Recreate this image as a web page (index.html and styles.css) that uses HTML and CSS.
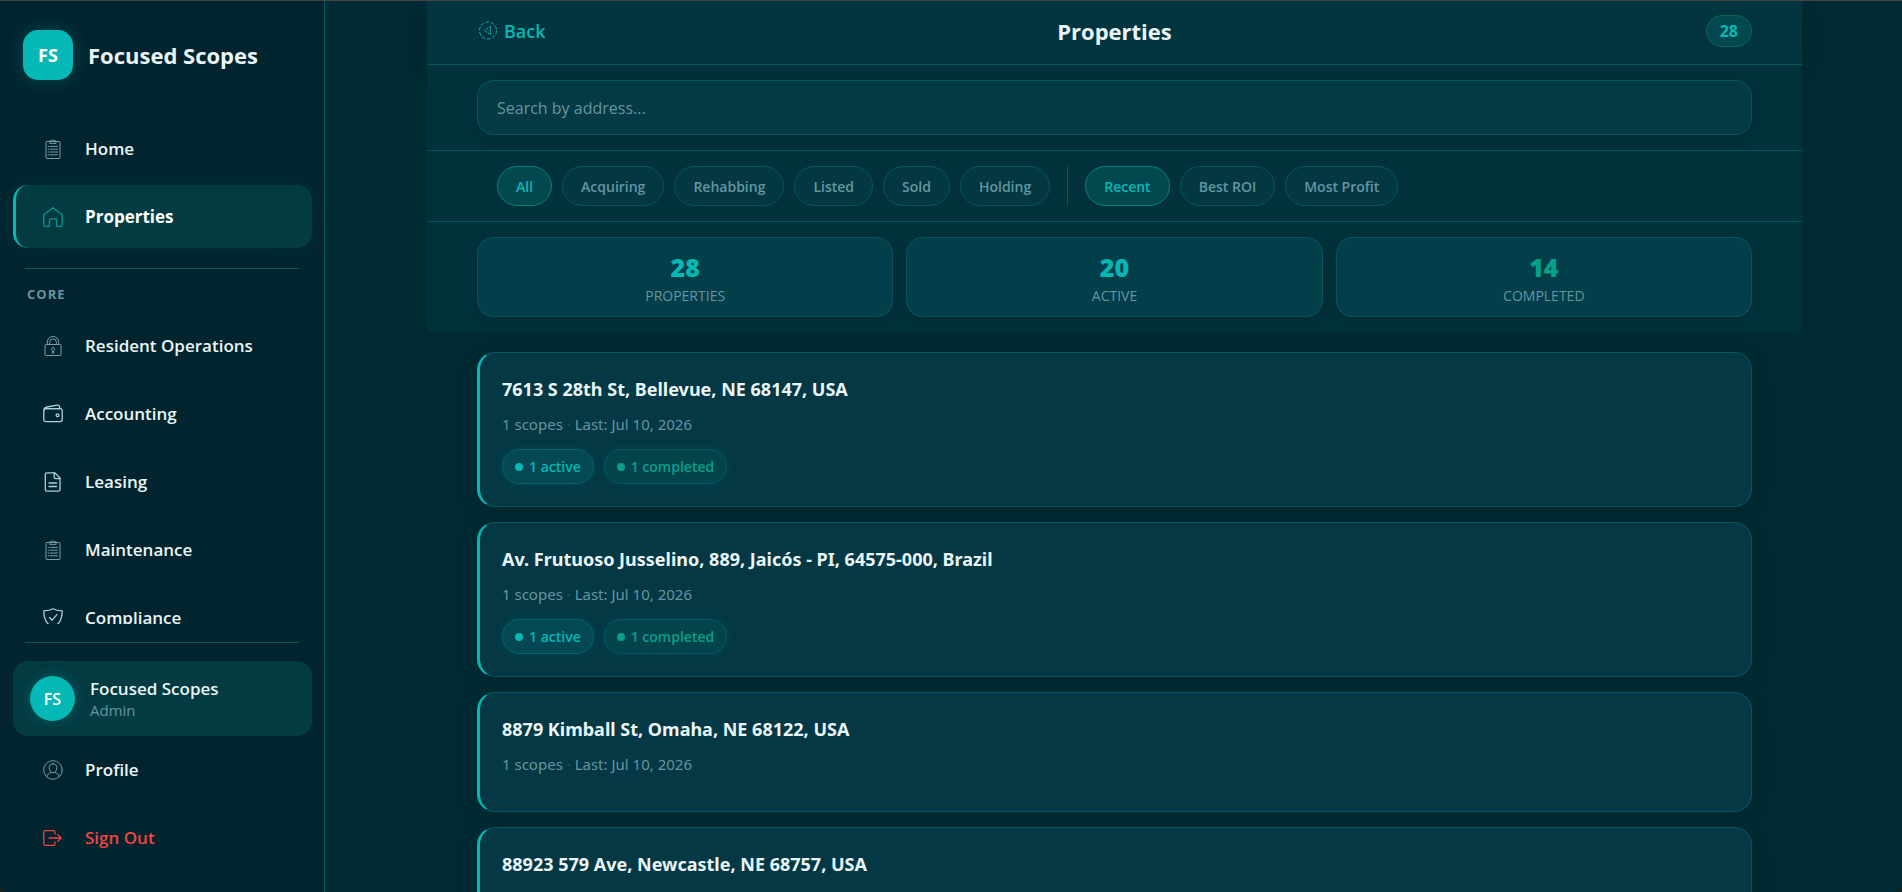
FILE: index.html
```html
<!DOCTYPE html>
<html lang="en">

<head>
  <meta charset="UTF-8">
  <meta name="viewport" content="width=device-width, initial-scale=1.0">
  <title>Properties - Focused Scopes</title>
  <link rel="stylesheet" href="styles.css">
</head>

<body>
  <svg class="sprite" aria-hidden="true">
    <symbol id="i-clipboard" viewBox="0 0 20 20">
      <rect x="3" y="2.5" width="14" height="17" rx="1" />
      <path d="M7 3V1.8h1.7a1.4 1.4 0 0 1 2.6 0H13V4.4H7z" />
      <path d="M7.5 7.4h7M7.5 10.2h7M7.5 13h7M7.5 15.8h7M5.2 7.4h.8M5.2 10.2h.8M5.2 13h.8M5.2 15.8h.8" />
    </symbol>
    <symbol id="i-house" viewBox="0 0 20 20">
      <path d="M.8 7.8 10 .8l9.200 7v10.200a1.300 1.300 0 0 1-1.300 1.300h-4.300v-6a1.400 1.400 0 0 0-1.400-1.400H7.800a1.400 1.400 0 0 0-1.400 1.400v6H2.100A1.300 1.300 0 0 1 .8 18z" />
    </symbol>
    <symbol id="i-lock" viewBox="0 0 20 20">
      <rect x="2" y="8.500" width="16" height="11" rx="1.200" />
      <path d="M4.300 8.500V6.200a5.700 5.700 0 0 1 11.400 0v2.300M6.600 8.500V6.400a3.400 3.400 0 0 1 6.800 0v2.100" />
      <path d="M9.300 16.800v-2.400a1.500 1.500 0 1 1 1.400 0v2.400z" />
    </symbol>
    <symbol id="i-wallet" viewBox="0 0 20 20">
      <rect x=".8" y="4.600" width="18.400" height="13" rx="2" />
      <path d="M1 6.200C1 4.200 2 3.400 4 3l10.400-1.800c1.400-.2 2.200.4 2.200 1.600v1.800M2 4.600h15" />
      <circle class="dot" cx="14.500" cy="11.200" r="1.400" />
    </symbol>
    <symbol id="i-file" viewBox="0 0 20 20">
      <path d="M4 .8h7.800L17 6v11.500a1.700 1.700 0 0 1-1.700 1.700H4a1.700 1.700 0 0 1-1.700-1.700v-15A1.700 1.700 0 0 1 4 .8z" />
      <path d="M11.200 1v4.200a1.400 1.400 0 0 0 1.400 1.400H17M6 11h7.500M6 14.500h7.500" />
    </symbol>
    <symbol id="i-shield" viewBox="0 0 20 20">
      <path d="M10 .8c2.600 1.400 5.600 2 9.200 2.100 0 7.300-1.700 13-9.200 16.300C2.500 15.900.8 10.200.8 2.900 4.400 2.800 7.400 2.200 10 .8z" />
      <path d="m6.500 9.500 2.600 2.700 4.800-5.600" />
    </symbol>
    <symbol id="i-user" viewBox="0 0 20 20">
      <circle cx="10" cy="10" r="9.300" />
      <path d="M10 3.800c2.500 0 4 1.700 3.800 4.100-.2 2.700-1.700 4.800-3.800 4.800S6.400 10.600 6.200 7.900C6 5.500 7.500 3.800 10 3.800z" />
      <path d="M3.800 16.800c.5-2.500 1.800-3.800 4.200-4.400M16.200 16.800c-.5-2.500-1.800-3.800-4.200-4.400" />
    </symbol>
    <symbol id="i-logout" viewBox="0 0 20 20">
      <path d="M12 6V4.200a1.600 1.600 0 0 0-1.600-1.600h-8A1.600 1.600 0 0 0 .8 4.200v11.600a1.600 1.600 0 0 0 1.600 1.600h8a1.600 1.600 0 0 0 1.600-1.600V14" />
      <path d="M6 10h12M14.800 6.600 18.200 10l-3.400 3.400" />
    </symbol>
    <symbol id="i-back" viewBox="0 0 20 20">
      <circle cx="11" cy="9.500" r="8.500" stroke-dasharray="3.600 1.740" />
      <path d="M13.500 5.500v8L7.200 9.500z" stroke-dasharray="2 1" />
    </symbol>
  </svg>

  <div class="app">
    <aside class="sidebar">
      <div class="brand">
        <span class="brand-logo">FS</span>
        <span class="brand-name">Focused Scopes</span>
      </div>

      <nav class="nav">
        <a class="nav-item" href="#"><svg class="icon faint"><use href="#i-clipboard" /></svg>Home</a>
        <a class="nav-item active" href="#"><svg class="icon"><use href="#i-house" /></svg>Properties</a>
        <div class="nav-label">Core</div>
        <a class="nav-item" href="#"><svg class="icon faint"><use href="#i-lock" /></svg>Resident Operations</a>
        <a class="nav-item" href="#"><svg class="icon"><use href="#i-wallet" /></svg>Accounting</a>
        <a class="nav-item" href="#"><svg class="icon"><use href="#i-file" /></svg>Leasing</a>
        <a class="nav-item" href="#"><svg class="icon faint"><use href="#i-clipboard" /></svg>Maintenance</a>
        <a class="nav-item" href="#"><svg class="icon"><use href="#i-shield" /></svg>Compliance</a>
      </nav>

      <div class="sidebar-footer">
        <div class="user-card">
          <span class="avatar">FS</span>
          <div>
            <div class="user-name">Focused Scopes</div>
            <div class="user-role">Admin</div>
          </div>
        </div>
        <a class="nav-item" href="#"><svg class="icon faint"><use href="#i-user" /></svg>Profile</a>
        <button class="nav-item sign-out" type="button"><svg class="icon"><use href="#i-logout" /></svg>Sign Out</button>
      </div>
    </aside>

    <main class="main">
      <header class="page-header">
        <a class="back" href="#"><svg class="icon"><use href="#i-back" /></svg>Back</a>
        <h1>Properties</h1>
        <div class="header-end"><span class="count">28</span></div>
      </header>

      <div class="search">
        <input type="text" placeholder="Search by address..." aria-label="Search by address">
      </div>

      <div class="filters">
        <button class="chip active" type="button">All</button>
        <button class="chip" type="button">Acquiring</button>
        <button class="chip" type="button">Rehabbing</button>
        <button class="chip" type="button">Listed</button>
        <button class="chip" type="button">Sold</button>
        <button class="chip" type="button">Holding</button>
        <span class="filter-divider"></span>
        <button class="chip active" type="button">Recent</button>
        <button class="chip" type="button">Best ROI</button>
        <button class="chip" type="button">Most Profit</button>
      </div>

      <div class="stats">
        <div class="stat">
          <div class="stat-value">28</div>
          <div class="stat-label">Properties</div>
        </div>
        <div class="stat">
          <div class="stat-value">20</div>
          <div class="stat-label">Active</div>
        </div>
        <div class="stat">
          <div class="stat-value done">14</div>
          <div class="stat-label">Completed</div>
        </div>
      </div>

      <div class="list">
        <article class="card">
          <h2>7613 S 28th St, Bellevue, NE 68147, USA</h2>
          <p class="meta">1 scopes <span class="sep">·</span> Last: Jul 10, 2026</p>
          <div class="badges">
            <span class="badge">1 active</span>
            <span class="badge done">1 completed</span>
          </div>
        </article>
        <article class="card">
          <h2>Av. Frutuoso Jusselino, 889, Jaicós - PI, 64575-000, Brazil</h2>
          <p class="meta">1 scopes <span class="sep">·</span> Last: Jul 10, 2026</p>
          <div class="badges">
            <span class="badge">1 active</span>
            <span class="badge done">1 completed</span>
          </div>
        </article>
        <article class="card">
          <h2>8879 Kimball St, Omaha, NE 68122, USA</h2>
          <p class="meta">1 scopes <span class="sep">·</span> Last: Jul 10, 2026</p>
        </article>
        <article class="card">
          <h2>88923 579 Ave, Newcastle, NE 68757, USA</h2>
        </article>
      </div>
    </main>
  </div>
</body>

</html>
```

FILE: styles.css
```css
:root {
  --accent: #05b8b5;
  --done: #06a08b;
  --text: #eaf5f7;
  --muted: #6496a1;
  --line: #04575f;
  --bg: #012b34;
}

* {
  box-sizing: border-box;
}

body,
html {
  height: 100%;
  margin: 0;
}

body {
  font-family: "Segoe UI", "Open Sans", "Noto Sans", sans-serif;
  font-size: 16px;
  color: var(--text);
  background: #1b1f20;
  overflow: hidden;
}

a {
  color: inherit;
  text-decoration: none;
}

button,
input {
  font-family: inherit;
}

h1,
h2,
p {
  margin: 0;
}

.sprite {
  position: absolute;
  width: 0;
  height: 0;
}

.icon {
  width: 20px;
  height: 20px;
  flex: none;
  fill: none;
  stroke: currentColor;
  stroke-width: 1.3;
  stroke-linejoin: round;
  stroke-linecap: round;
}

.icon.faint {
  stroke-width: 1;
  opacity: 0.7;
}

.icon .dot {
  fill: currentColor;
  stroke: none;
}

.app {
  display: flex;
  height: 100%;
  border-top: 1px solid #444;
  border-radius: 0 0 8px 8px;
  background: var(--bg);
  overflow: hidden;
}

/* sidebar */
.sidebar {
  display: flex;
  flex-direction: column;
  flex: none;
  width: 325px;
  padding: 0 12px 0 13px;
  background: #02242e;
  border-right: 1px solid var(--line);
}

.brand {
  display: flex;
  align-items: center;
  gap: 15px;
  padding: 29px 10px 0;
}

.brand-logo,
.avatar {
  display: flex;
  align-items: center;
  justify-content: center;
  flex: none;
  color: #fff;
  background: var(--accent);
  font-weight: 700;
}

.brand-logo {
  width: 50px;
  height: 50px;
  border-radius: 15px;
  font-size: 18px;
  box-shadow: 0 0 20px rgba(5, 184, 181, 0.25);
}

.brand-name {
  font-size: 22px;
  font-weight: 700;
}

.nav {
  flex: 1;
  min-height: 0;
  margin: 37px -12px 0 -13px;
  padding: 0 12px 0 13px;
  overflow-y: auto;
  scrollbar-width: none;
}

.nav-item {
  display: flex;
  align-items: center;
  gap: 22px;
  width: 100%;
  height: 63px;
  margin-bottom: 5px;
  padding: 0 28px 0 27px;
  border: 0;
  border-left: 3px solid transparent;
  border-radius: 15px;
  background: none;
  font-size: 17px;
  font-weight: 600;
  text-align: left;
}

.nav-item .icon {
  color: #a5d3da;
}

.nav-item.active {
  color: #fff;
  font-weight: 700;
  background: #033b42;
  border-left-color: var(--accent);
  box-shadow: 0 0 25px rgba(5, 184, 181, 0.1);
}

.nav-item.active .icon {
  color: #089692;
}

.nav-label {
  margin: 20px 13px 8px 12px;
  padding: 13px 2px 0;
  border-top: 1px solid var(--line);
  color: var(--muted);
  font-size: 13px;
  line-height: 24px;
  font-weight: 700;
  letter-spacing: 1px;
  text-transform: uppercase;
}

.sidebar-footer {
  margin-top: 18px;
  padding-bottom: 18px;
}

.sidebar-footer::before {
  content: "";
  display: block;
  height: 1px;
  margin: 0 13px 18px 12px;
  background: var(--line);
}

.user-card {
  display: flex;
  align-items: center;
  gap: 15px;
  height: 75px;
  margin-bottom: 2px;
  padding: 0 17px;
  border-radius: 15px;
  background: #033b42;
}

.avatar {
  width: 45px;
  height: 45px;
  border-radius: 50%;
  font-size: 16px;
  font-weight: 600;
  box-shadow: 0 0 13px rgba(5, 184, 181, 0.25);
}

.user-name {
  font-size: 17px;
  line-height: 22px;
  font-weight: 600;
}

.user-role {
  color: var(--muted);
  font-size: 15px;
  line-height: 20px;
}

.nav-item.sign-out,
.sign-out .icon {
  color: #ef4444;
}

/* main column */
.main {
  flex: 1;
  min-width: 0;
  padding: 0 100px 0 102px;
  overflow-y: auto;
  scrollbar-width: none;
}

.page-header {
  display: grid;
  grid-template-columns: 1fr auto 1fr;
  align-items: center;
  height: 64px;
  padding: 0 50px 3px;
  background: #033540;
  border-bottom: 1px solid var(--line);
  box-shadow: 0 5px 25px rgba(0, 0, 0, 0.1);
}

.page-header h1 {
  font-size: 22px;
  font-weight: 700;
}

.back {
  display: flex;
  align-items: center;
  gap: 7px;
  color: var(--accent);
  font-size: 18px;
  font-weight: 600;
}

.back .icon {
  stroke-width: 1;
  stroke-linecap: butt;
}

.header-end {
  text-align: right;
}

.count {
  display: inline-block;
  padding: 0 13px;
  border: 1px solid #07636a;
  border-radius: 16px;
  background: #03474f;
  color: var(--accent);
  font-size: 16px;
  line-height: 30px;
  font-weight: 700;
}

.search,
.filters,
.stats {
  padding: 15px 50px;
  background: #01313b;
}

.search,
.filters {
  border-bottom: 1px solid var(--line);
}

.search input {
  display: block;
  width: 100%;
  height: 55px;
  padding: 0 19px;
  border: 1px solid var(--line);
  border-radius: 16px;
  outline: none;
  background: #033a45;
  color: var(--text);
  font-size: 16px;
  box-shadow: 0 3px 13px rgba(0, 0, 0, 0.1);
}

.search input::placeholder {
  color: var(--muted);
}

.filters {
  display: flex;
  gap: 10px;
  padding: 15px 70px;
}

.chip {
  height: 40px;
  padding: 0 18px;
  border: 1px solid var(--line);
  border-radius: 20px;
  background: #033843;
  color: var(--muted);
  font-size: 14px;
  font-weight: 600;
}

.chip.active {
  background: #03484f;
  border-color: #07807f;
  color: var(--accent);
}

.filter-divider {
  width: 1px;
  margin: 0 7px;
  background: var(--line);
}

.stats {
  display: grid;
  grid-template-columns: repeat(3, 1fr);
  gap: 13px;
}

.stat {
  height: 80px;
  padding-top: 14px;
  border: 1px solid var(--line);
  border-radius: 16px;
  background: #033f4a;
  text-align: center;
  box-shadow: 0 3px 13px rgba(0, 0, 0, 0.12);
}

.stat-value {
  color: var(--accent);
  font-size: 25px;
  line-height: 30px;
  font-weight: 800;
}

.stat-value.done {
  color: var(--done);
}

.stat-label {
  color: var(--muted);
  font-size: 14px;
  line-height: 28px;
  font-weight: 500;
  text-transform: uppercase;
}

.list {
  display: flex;
  flex-direction: column;
  gap: 15px;
  padding: 20px 50px;
}

.card {
  min-height: 120px;
  padding: 22px;
  border: 1px solid var(--line);
  border-left: 3px solid var(--accent);
  border-radius: 18px;
  background: #033844;
  box-shadow: 0 5px 25px rgba(0, 0, 0, 0.12);
}

.card h2,
.meta {
  font-family: "Segoe UI", "Noto Sans", sans-serif;
}

.card h2 {
  font-size: 18px;
  line-height: 28px;
  font-weight: 700;
}

.meta {
  margin-top: 10px;
  color: var(--muted);
  font-size: 15px;
  line-height: 22px;
}

.sep {
  color: #07636a;
}

.badges {
  display: flex;
  gap: 10px;
  margin-top: 14px;
}

.badge {
  display: flex;
  align-items: center;
  gap: 6px;
  height: 35px;
  padding: 0 12px;
  border: 1px solid #06646c;
  border-radius: 18px;
  background: #034852;
  color: var(--accent);
  font-size: 14px;
  font-weight: 600;
  box-shadow: 0 0 10px rgba(5, 184, 181, 0.12);
}

.badge::before {
  content: "";
  width: 8px;
  height: 8px;
  border-radius: 50%;
  background: currentColor;
}

.badge.done {
  color: var(--done);
  background: #03434c;
  border-color: #055a5f;
}
```
